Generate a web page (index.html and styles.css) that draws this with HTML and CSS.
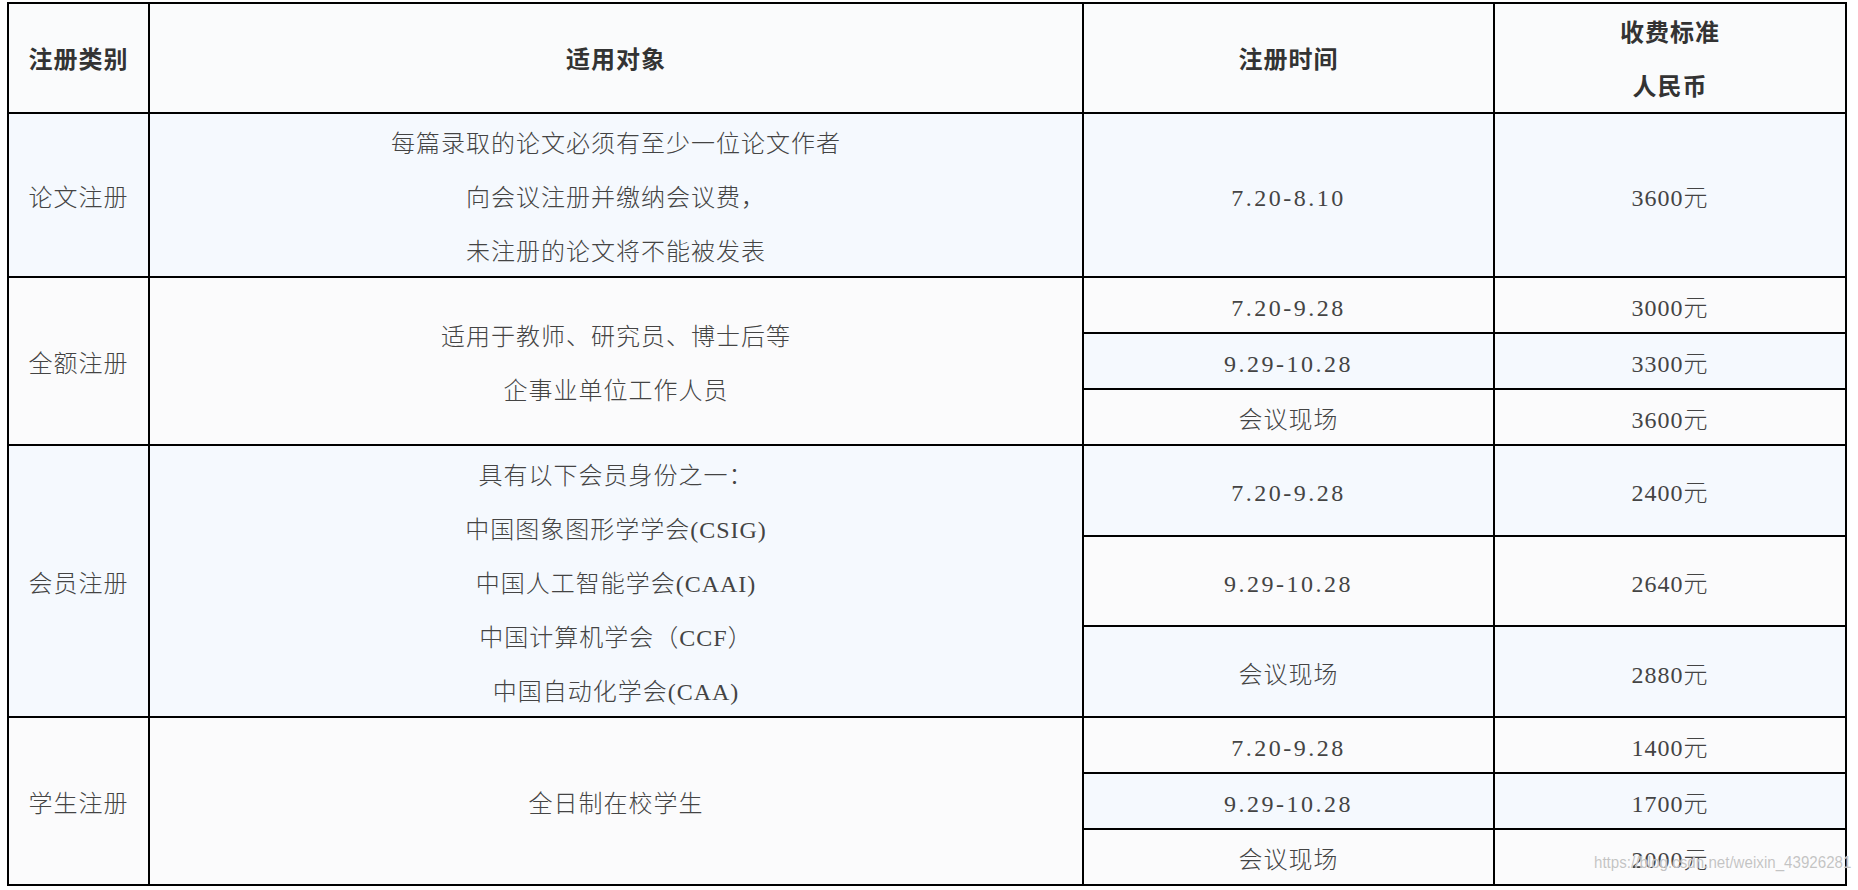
FILE: index.html
```html
<!DOCTYPE html>
<html lang="zh-CN">
<head>
<meta charset="utf-8">
<title>注册费用</title>
<link rel="stylesheet" href="styles.css">
</head>
<body>
<div class="page">
  <table class="fees">
    <colgroup>
      <col class="c-type">
      <col class="c-who">
      <col class="c-time">
      <col class="c-fee">
    </colgroup>
    <thead>
      <tr class="row-head">
        <th>注册类别</th>
        <th>适用对象</th>
        <th>注册时间</th>
        <th>收费标准<br>人民币</th>
      </tr>
    </thead>
    <tbody>
      <tr class="row-blue">
        <td><span class="tx">论文注册</span></td>
        <td><span class="tx">每篇录取的论文必须有至少一位论文作者<br>向会议注册并缴纳会议费，<br>未注册的论文将不能被发表</span></td>
        <td class="date"><span class="tx">7.20-8.10</span></td>
        <td><span class="tx">3600元</span></td>
      </tr>
      <tr class="row-white">
        <td rowspan="3"><span class="tx">全额注册</span></td>
        <td rowspan="3"><span class="tx">适用于教师、研究员、博士后等<br>企事业单位工作人员</span></td>
        <td class="date"><span class="tx">7.20-9.28</span></td>
        <td><span class="tx">3000元</span></td>
      </tr>
      <tr class="row-blue">
        <td class="date"><span class="tx">9.29-10.28</span></td>
        <td><span class="tx">3300元</span></td>
      </tr>
      <tr class="row-white">
        <td><span class="tx">会议现场</span></td>
        <td><span class="tx">3600元</span></td>
      </tr>
      <tr class="row-blue">
        <td rowspan="3"><span class="tx">会员注册</span></td>
        <td rowspan="3"><span class="tx">具有以下会员身份之一：<br>中国图象图形学学会(CSIG)<br>中国人工智能学会(CAAI)<br>中国计算机学会（CCF）<br>中国自动化学会(CAA)</span></td>
        <td class="date"><span class="tx">7.20-9.28</span></td>
        <td><span class="tx">2400元</span></td>
      </tr>
      <tr class="row-white">
        <td class="date"><span class="tx">9.29-10.28</span></td>
        <td><span class="tx">2640元</span></td>
      </tr>
      <tr class="row-blue">
        <td><span class="tx">会议现场</span></td>
        <td><span class="tx">2880元</span></td>
      </tr>
      <tr class="row-white">
        <td rowspan="3"><span class="tx">学生注册</span></td>
        <td rowspan="3"><span class="tx">全日制在校学生</span></td>
        <td class="date"><span class="tx">7.20-9.28</span></td>
        <td><span class="tx">1400元</span></td>
      </tr>
      <tr class="row-blue">
        <td class="date"><span class="tx">9.29-10.28</span></td>
        <td><span class="tx">1700元</span></td>
      </tr>
      <tr class="row-white">
        <td><span class="tx">会议现场</span></td>
        <td><span class="tx">2000元</span></td>
      </tr>
    </tbody>
  </table>
  <div class="watermark">https://blog.csdn.net/weixin_43926281</div>
</div>
</body>
</html>
```

FILE: styles.css
```css
html, body {
  margin: 0;
  padding: 0;
  background: #ffffff;
}

.page {
  position: relative;
  width: 1858px;
  height: 890px;
  padding: 2px 0 0 7px;
  box-sizing: border-box;
  overflow: hidden;
}

.fees {
  border-collapse: collapse;
  table-layout: fixed;
  width: 1838px;
  font-family: "Liberation Serif", "Noto Sans CJK SC", serif;
  font-size: 24px;
  letter-spacing: 1px;
  color: #444444;
}

.c-type { width: 141px; }
.c-who { width: 934px; }
.c-time { width: 411px; }
.c-fee { width: 352px; }

.fees th,
.fees td {
  border: 2px solid #000000;
  text-align: center;
  vertical-align: middle;
  line-height: 54px;
  padding: 0;
}

.fees td {
  font-weight: 300;
}

.fees td .tx {
  line-height: 30px;
  vertical-align: -3px;
}

.fees td.date {
  letter-spacing: 2.5px;
}

.fees th {
  font-family: "Noto Sans CJK SC", sans-serif;
  font-weight: 700;
  color: #333333;
}

.row-head { background: #fafbfc; }
.row-blue { background: #f5f9fe; }
.row-white { background: #fbfbfc; }

.watermark {
  position: absolute;
  left: 1594px;
  top: 853px;
  font-family: "Liberation Sans", sans-serif;
  font-size: 17px;
  line-height: 20px;
  white-space: nowrap;
  color: rgba(185, 185, 185, 0.85);
  text-shadow: 0 0 1px #ffffff;
  transform: scaleX(0.89);
  transform-origin: left center;
}
```
